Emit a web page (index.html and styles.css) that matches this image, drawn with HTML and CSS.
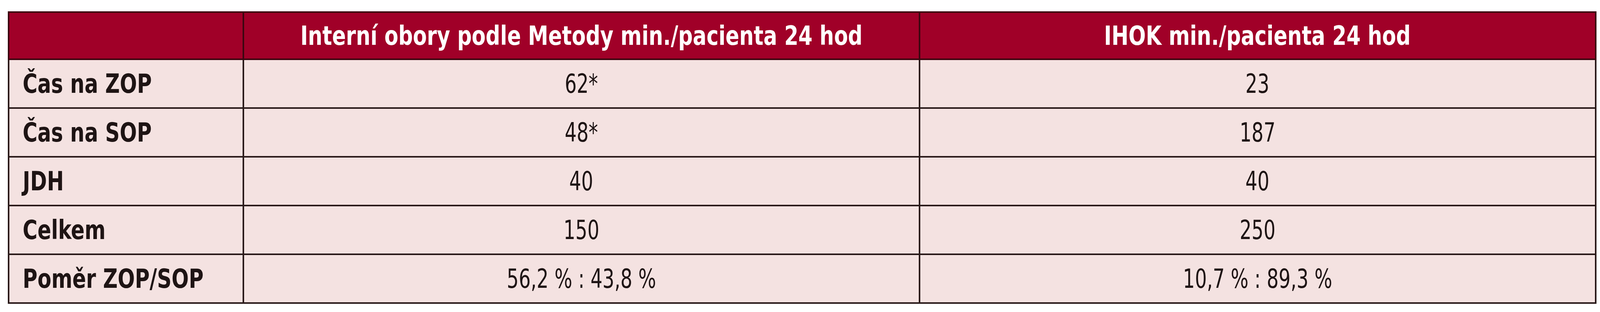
FILE: index.html
```html
<!DOCTYPE html>
<html lang="cs">
<head>
<meta charset="utf-8">
<title>Tabulka</title>
<link rel="stylesheet" href="styles.css">
</head>
<body>
<div class="grid" role="table">
  <div class="cell head first" role="columnheader"></div>
  <div class="cell head" role="columnheader"><span class="txt">Interní obory podle Metody min./pacienta 24 hod</span></div>
  <div class="cell head" role="columnheader"><span class="txt">IHOK min./pacienta 24 hod</span></div>

  <div class="cell label first" role="rowheader"><span class="txt">Čas na ZOP</span></div>
  <div class="cell" role="cell"><span class="txt">62*</span></div>
  <div class="cell" role="cell"><span class="txt">23</span></div>

  <div class="cell label first" role="rowheader"><span class="txt">Čas na SOP</span></div>
  <div class="cell" role="cell"><span class="txt">48*</span></div>
  <div class="cell" role="cell"><span class="txt">187</span></div>

  <div class="cell label first" role="rowheader"><span class="txt">JDH</span></div>
  <div class="cell" role="cell"><span class="txt">40</span></div>
  <div class="cell" role="cell"><span class="txt">40</span></div>

  <div class="cell label first" role="rowheader"><span class="txt">Celkem</span></div>
  <div class="cell" role="cell"><span class="txt">150</span></div>
  <div class="cell" role="cell"><span class="txt">250</span></div>

  <div class="cell label first" role="rowheader"><span class="txt">Poměr ZOP/SOP</span></div>
  <div class="cell" role="cell"><span class="txt">56,2 % : 43,8 %</span></div>
  <div class="cell" role="cell"><span class="txt">10,7 % : 89,3 %</span></div>
</div>
</body>
</html>
```

FILE: styles.css
```css
html, body {
  margin: 0;
  padding: 0;
  background: #ffffff;
}

body {
  padding: 29px 0 0 0.487vw;
  font-family: "DejaVu Sans Condensed", "DejaVu Sans", "Liberation Sans", sans-serif;
  font-stretch: condensed;
  overflow: hidden;
}

.grid {
  display: grid;
  grid-template-columns: 14.766vw 42.258vw 42.258vw;
  grid-auto-rows: 125px;
  width: 99.282vw;
  color: #1e1414;
}

.cell {
  box-sizing: border-box;
  display: flex;
  align-items: center;
  justify-content: center;
  min-width: 0;
  background: #f4e2e1;
  border-right: 4px solid #2a1a1a;
  border-bottom: 4px solid #2a1a1a;
  font-size: 68px;
  line-height: 1;
  font-weight: 400;
  white-space: nowrap;
  overflow: hidden;
}

.cell.first {
  border-left: 4px solid #2a1a1a;
}

.cell.head {
  background: #a00028;
  color: #ffffff;
  font-weight: 700;
  border-top: 4px solid #3c0610;
  border-right-color: #3c0610;
  border-bottom-color: #3c0610;
}

.cell.head.first {
  border-left-color: #3c0610;
}

.txt {
  display: inline-block;
  transform: scaleX(0.785);
  transform-origin: center center;
}

.cell.head .txt {
  transform: scaleX(0.85);
}

.cell.label {
  justify-content: flex-start;
  padding-left: 0.83vw;
  font-weight: 700;
}

.cell.label .txt {
  transform: scaleX(0.845);
  transform-origin: left center;
}
```
